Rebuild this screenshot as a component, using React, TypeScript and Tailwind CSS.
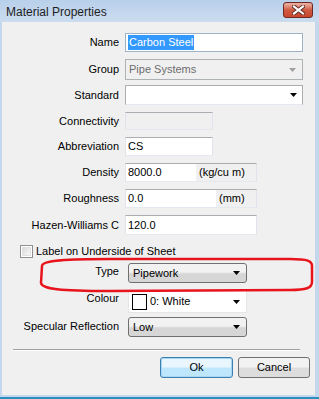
import React from "react";

const Arrow = ({ color = "#000" }: { color?: string }) => (
  <svg width="7" height="4" viewBox="0 0 7 4">
    <path d="M0 0h7L3.5 4z" fill={color} />
  </svg>
);

const Label = ({ text, className = "" }: { text: string; className?: string }) => (
  <div className={`w-[117px] shrink-0 text-right ${className}`}>{text}</div>
);

const TextBox = ({
  w,
  h = "h-[19px]",
  bg = "bg-white",
  children,
}: {
  w: string;
  h?: string;
  bg?: string;
  children?: React.ReactNode;
}) => (
  <div
    className={`${w} ${h} ${bg} ml-[6px] flex items-center border border-[#abadb3] border-l-[#e2e3ea] border-r-[#e2e3ea] border-b-[#e3e9ef] pl-[2px] overflow-hidden`}
  >
    {children}
  </div>
);

const UnitBox = ({ value, unit, split }: { value: string; unit: string; split: string }) => (
  <div className="w-[132px] h-[19px] ml-[6px] flex border border-[#abadb3] border-l-[#e2e3ea] border-r-[#e2e3ea] border-b-[#e3e9ef] overflow-hidden">
    <div className={`${split} h-full bg-white flex items-center pl-[2px]`}>{value}</div>
    <div className="flex-1 h-full bg-[#f0f0f0] flex items-center pl-[3px]">{unit}</div>
  </div>
);

const ButtonCombo = ({ text }: { text: string }) => (
  <div className="w-[119px] h-[20px] ml-[9px] flex items-center justify-between pl-[4px] pr-[6px] rounded-[3px] border border-[#707070] bg-gradient-to-b from-[#f2f2f2] from-45% to-[#d6d6d6] to-55%">
    <span className="pt-[1px]">{text}</span>
    <Arrow />
  </div>
);

export default function App() {
  return (
    <div
      className="relative w-[319px] h-[399px] flex flex-col bg-[#c3d7ed] text-[11px] text-black leading-none"
      style={{ fontFamily: '"Liberation Sans", Arial, sans-serif' }}
    >
      {/* title bar */}
      <div className="h-[22px] shrink-0 flex items-center justify-between pl-[6px] pr-[6px] bg-gradient-to-b from-[#b8d0ea] to-[#cbdcef]">
        <span className="text-[12px] text-[#1e1e1e] pt-[2px]">Material Properties</span>
        <div className="w-[30px] h-[16px] mt-[-2px] flex items-center justify-center rounded-[3px] border border-[#6e2b26] bg-gradient-to-b from-[#e8a797] from-10% via-[#cf5a40] via-50% to-[#c9462c]">
          <svg width="13" height="10" viewBox="0 0 13 10">
            <path d="M2 1.5l9 7M11 1.5l-9 7" stroke="#5b2a24" strokeWidth="4" strokeLinecap="square" />
            <path d="M2 1.5l9 7M11 1.5l-9 7" stroke="#fff" strokeWidth="2.2" strokeLinecap="square" />
          </svg>
        </div>
      </div>

      {/* client area */}
      <div className="flex-1 ml-[2px] mr-[4px] mb-[2px] bg-[#f0f0f0] flex flex-col pt-[11px]">
        <div className="flex items-center h-[19px]">
          <Label text="Name" />
          <div className="w-[178px] h-[19px] ml-[6px] flex items-center border border-[#9fb3c8] bg-white pl-[2px]">
            <span className="bg-[#3399ff] text-white px-[1px] py-[2px]">Carbon Steel</span>
          </div>
        </div>

        <div className="flex items-center h-[21px] mt-[7px]">
          <Label text="Group" />
          <div className="w-[178px] h-[21px] ml-[6px] flex items-center justify-between border border-[#adb2b5] bg-[#f0f0f0] pl-[3px] pr-[6px] text-[#6d6d6d]">
            <span>Pipe Systems</span>
            <Arrow color="#a0a0a0" />
          </div>
        </div>

        <div className="flex items-center h-[20px] mt-[5px]">
          <Label text="Standard" />
          <div className="w-[178px] h-[20px] ml-[6px] flex items-center justify-end border border-[#abadb3] border-b-[#e3e9ef] bg-white pr-[5px]">
            <Arrow />
          </div>
        </div>

        <div className="flex items-center h-[18px] mt-[7px]">
          <Label text="Connectivity" />
          <TextBox w="w-[88px]" h="h-[18px]" bg="bg-[#f0f0f0]" />
        </div>

        <div className="flex items-center h-[19px] mt-[7px]">
          <Label text="Abbreviation" />
          <TextBox w="w-[88px]">CS</TextBox>
        </div>

        <div className="flex items-center h-[19px] mt-[7px]">
          <Label text="Density" />
          <UnitBox value="8000.0" unit="(kg/cu m)" split="w-[70px]" />
        </div>

        <div className="flex items-center h-[19px] mt-[7px]">
          <Label text="Roughness" />
          <UnitBox value="0.0" unit="(mm)" split="w-[90px]" />
        </div>

        <div className="flex items-center h-[20px] mt-[7px]">
          <Label text="Hazen-Williams C" />
          <TextBox w="w-[132px]" h="h-[20px]">120.0</TextBox>
        </div>

        <div className="flex items-center h-[13px] mt-[10px] pl-[18px]">
          <div className="w-[13px] h-[13px] border border-[#8f8f8f] p-[1px] bg-white">
            <div className="w-full h-full bg-gradient-to-br from-[#dcdcdc] to-[#f8f8f8] border border-[#e0e0e0]" />
          </div>
          <span className="ml-[3px]">Label on Underside of Sheet</span>
        </div>

        <div className="flex items-start h-[20px] mt-[5px]">
          <Label text="Type" className="pt-[3px]" />
          <ButtonCombo text="Pipework" />
        </div>

        <div className="flex items-start h-[23px] mt-[7px]">
          <Label text="Colour" className="pt-[3px]" />
          <div className="w-[119px] h-[23px] ml-[9px] flex items-center justify-between pl-[3px] pr-[6px] bg-white border border-[#e6e6e6]">
            <div className="flex items-center">
              <div className="w-[15px] h-[16px] border border-black bg-white" />
              <span className="ml-[3px]">0: White</span>
            </div>
            <Arrow />
          </div>
        </div>

        <div className="flex items-start h-[20px] mt-[4px]">
          <Label text="Specular Reflection" className="pt-[4px]" />
          <ButtonCombo text="Low" />
        </div>

        <div className="mt-[12px] ml-[11px] w-[287px] h-[2px] border-t border-[#a0a0a0] border-b border-b-white" />

        <div className="flex justify-end gap-[5px] mt-[6px] pr-[5px]">
          <div className="w-[73px] h-[21px] flex items-center justify-center rounded-[3px] border border-[#3c7fb1] bg-gradient-to-b from-[#eaf6fd] from-45% to-[#bee6fd] to-55% shadow-[inset_0_0_0_1px_#a6d6f3]">
            Ok
          </div>
          <div className="w-[72px] h-[21px] flex items-center justify-center rounded-[3px] border border-[#707070] bg-gradient-to-b from-[#f2f2f2] from-45% to-[#dddddd] to-55%">
            Cancel
          </div>
        </div>
      </div>
      <div className="h-[2px] bg-[#2a8fbf] shrink-0" />

      {/* red highlight drawn over the Type row */}
      <svg className="absolute left-0 top-0 pointer-events-none" width="319" height="399">
        <path
          d="M42 266 C42 260 70 259 110 259 L290 259 C308 259 312 261 312 266 L312 282 C312 288 306 290 290 290 L110 291 C60 291 42 289 41 283 Z"
          fill="none"
          stroke="#e8141c"
          strokeWidth="2.5"
        />
      </svg>
    </div>
  );
}
